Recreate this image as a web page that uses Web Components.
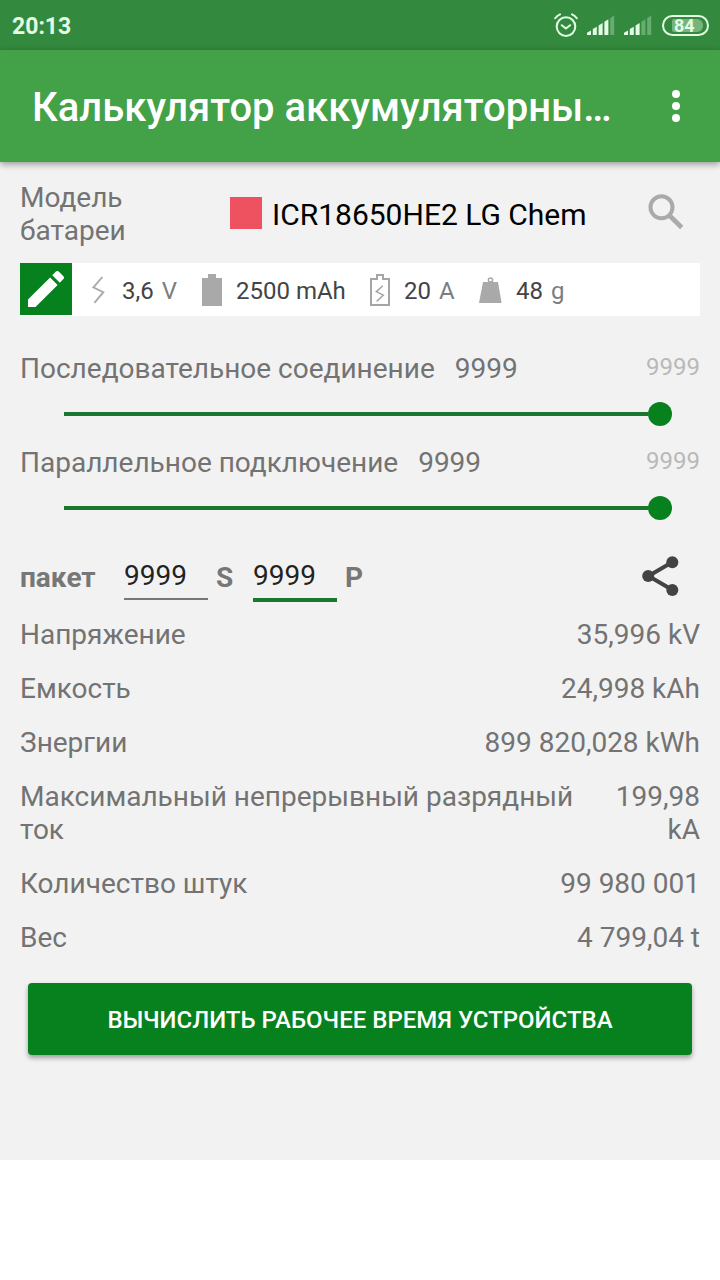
<!DOCTYPE html>
<html lang="ru">
<head>
  <meta charset="utf-8">
  <title>Калькулятор аккумуляторных батарей</title>
  <style>
    body {
      margin: 0;
      background-color: #fff;
      font-family: Roboto, "Noto Sans", sans-serif;
      --green: #07801e;
      --track: #1b7730;
      --toolbar: #43a147;
      --status: #338a3e;
      --surface: #f2f2f2;
      --label: #737373;
    }
  </style>
</head>
<body>
  <battery-app></battery-app>

  <script>
    const icons = {
      alarm: `<svg width="24" height="24" viewBox="0 0 24 24" fill="none" stroke="#e4fbe6" stroke-width="2" stroke-linecap="round" stroke-linejoin="round">
        <circle cx="12" cy="13.6" r="9.3"/><path d="M7.8 12.2l4.1 3.3 4.2-3.3M1.2 5.2Q3 2.6 6 1.3M22.8 5.2Q21 2.6 18 1.3"/></svg>`,
      more: `<svg width="8" height="34" viewBox="0 0 8 34" fill="#fff"><circle cx="4" cy="5" r="4"/><circle cx="4" cy="17" r="4"/><circle cx="4" cy="29" r="4"/></svg>`,
      search: `<svg width="36" height="36" viewBox="0 0 36 36" fill="none" stroke="#aaa"><circle cx="13.5" cy="13.3" r="11" stroke-width="4"/><path d="M21.5 21.5l12.2 12" stroke-width="4.6"/></svg>`,
      edit: `<svg width="36" height="36" viewBox="3 3 18 18" fill="#fff"><path d="M3 17.25V21h3.75L17.81 9.94l-3.75-3.75L3 17.25zM20.71 7.04c.39-.39.39-1.02 0-1.41l-2.34-2.34c-.39-.39-1.02-.39-1.41 0l-1.83 1.83 3.75 3.75 1.83-1.83z"/></svg>`,
      bolt: `<svg width="13" height="28" viewBox="0 0 13 28" fill="none" stroke="#aaa" stroke-width="1.9"><path d="M10.4 1L1.4 11.4 11.3 16.2 2.4 26.8"/></svg>`,
      battery: `<svg width="20" height="32" viewBox="0 0 20 32" fill="#a9a9a9"><path d="M0 4h6V0h8v4h6v28H0z"/></svg>`,
      discharge: `<svg width="20" height="32" viewBox="0 0 20 32" fill="none" stroke="#a5a5a5"><path d="M1 5h6V1h6v4h6v26H1z" stroke-width="2"/><path d="M12.9 11.8L6.3 17.6 13.3 21.2 6.7 27.4" stroke-width="1.5"/></svg>`,
      weight: `<svg width="23" height="26" viewBox="0 0 23 26"><path d="M4 5h15l3.6 21H0z" fill="#a9a9a9"/><circle cx="11.5" cy="3" r="2.1" fill="#fff" stroke="#a9a9a9" stroke-width="1.5"/></svg>`,
      share: `<svg width="37" height="40" viewBox="0 0 37 40" fill="#434343"><path d="M30.5 6L6.5 20l24 14" fill="none" stroke="#434343" stroke-width="4"/><circle cx="30.3" cy="6.2" r="6"/><circle cx="6.2" cy="20" r="6"/><circle cx="30.3" cy="34" r="6"/></svg>`
    };

    // four lit bars at most, the rest of the five are dimmed
    const signal = (level) => {
      let bars = "";
      for (let i = 0; i < 5; i++) {
        const h = 4 + i * 3.7;
        const x = i * 5.8;
        bars += `<path d="M${x} ${20 - h + 1.8}l4-2.4V20h-4z" fill="#e4fbe6" opacity="${i < level ? 1 : 0.3}"/>`;
      }
      return `<svg width="28" height="20" viewBox="0 0 28 20">${bars}</svg>`;
    };

    class UiIcon extends HTMLElement {
      constructor() {
        super();
        this.attachShadow({ mode: "open" });
      }

      connectedCallback() {
        const name = this.getAttribute("name");
        const svg = name === "signal" ? signal(Number(this.getAttribute("level"))) : icons[name];
        this.shadowRoot.innerHTML = `
          <style>
            :host { display: block; flex: none; }
            svg { display: block; }
          </style>
          ${svg}`;
      }
    }

    customElements.define("ui-icon", UiIcon);

    const define = (name, html) => {
      const template = document.createElement("template");
      template.innerHTML = html;

      customElements.define(name, class extends HTMLElement {
        constructor() {
          super();
          this.attachShadow({ mode: "open" });
          this.shadowRoot.appendChild(template.content.cloneNode(true));
        }
      });
    };

    define("status-bar", /* html */ `
      <style>
        :host {
          display: flex;
          align-items: center;
          box-sizing: border-box;
          height: 50px;
          padding: 0 11px 0 12px;
          background-color: var(--status);
          color: #e4fbe6;
        }

        .time {
          flex: 1;
          font-size: 23px;
          font-weight: 700;
          line-height: 27px;
          padding-top: 2px;
        }

        .icons {
          display: flex;
          align-items: center;
          gap: 9px;
        }

        .battery {
          box-sizing: border-box;
          width: 47px;
          height: 21px;
          margin-left: 1px;
          padding: 2px 4px 2px 8px;
          border: 2px solid #e4fbe6;
          border-radius: 11px;
        }

        .level {
          height: 13px;
          border-radius: 2px 6px 6px 2px;
          background-color: #75b57c;
          font-size: 18px;
          font-weight: 700;
          line-height: 14px;
          padding-left: 2px;
        }
      </style>
      <span class="time">20:13</span>
      <div class="icons">
        <ui-icon name="alarm"></ui-icon>
        <ui-icon name="signal" level="4"></ui-icon>
        <ui-icon name="signal" level="3"></ui-icon>
        <div class="battery"><div class="level">84</div></div>
      </div>`);

    define("tool-bar", /* html */ `
      <style>
        :host {
          display: flex;
          align-items: center;
          justify-content: space-between;
          box-sizing: border-box;
          height: 112px;
          padding: 0 40px 0 32px;
          background-color: var(--toolbar);
          box-shadow: 0 2px 7px rgba(0, 0, 0, .4);
          position: relative;
          color: #fff;
        }

        h1 {
          margin: 0;
          padding-top: 4px;
          font-size: 40px;
          font-weight: 500;
          line-height: 48px;
          white-space: nowrap;
        }
      </style>
      <h1><slot></slot></h1>
      <ui-icon name="more"></ui-icon>`);

    define("model-picker", /* html */ `
      <style>
        :host {
          display: flex;
          align-items: center;
          height: 66px;
          padding-right: 16px;
        }

        .label {
          width: 210px;
          color: var(--label);
        }

        .swatch {
          width: 32px;
          height: 32px;
          margin: 0 10px 3px 0;
          background-color: #ee5261;
        }

        .name {
          flex: 1;
          color: #000;
          font-size: 30px;
        }

        ui-icon {
          margin-bottom: 4px;
        }
      </style>
      <div class="label">Модель<br>батареи</div>
      <div class="swatch"></div>
      <div class="name"><slot></slot></div>
      <ui-icon name="search"></ui-icon>`);

    define("spec-bar", /* html */ `
      <style>
        :host {
          display: grid;
          grid-template-columns: 72px 110px 168px 109px 1fr;
          align-items: center;
          height: 53px;
          margin-top: 16px;
          background-color: #fff;
        }

        .edit {
          display: flex;
          align-items: center;
          justify-content: center;
          width: 52px;
          height: 52px;
          align-self: start;
          background-color: var(--green);
        }
      </style>
      <div class="edit"><ui-icon name="edit"></ui-icon></div>
      <slot></slot>`);

    define("spec-item", /* html */ `
      <style>
        :host {
          display: flex;
          align-items: center;
          font-size: 24px;
          line-height: 28px;
          color: #444;
          white-space: nowrap;
        }

        .text {
          padding: 3px 0 0 14px;
        }

        :host([wide]) .text {
          padding-left: 17px;
        }

        ::slotted(i) {
          margin-left: 8px;
          font-style: normal;
          color: #7d7d7d;
        }
      </style>
      <slot name="icon"></slot>
      <div class="text"><slot></slot></div>`);

    define("cell-slider", /* html */ `
      <style>
        :host {
          display: block;
          height: 94px;
          color: var(--label);
        }

        .caption {
          display: flex;
          align-items: center;
          height: 33px;
        }

        .value {
          flex: 1;
          margin-left: 20px;
        }

        .max {
          font-size: 24px;
          color: #b9b9b9;
          padding-bottom: 2px;
        }

        .track {
          display: flex;
          align-items: center;
          height: 24px;
          margin: 17px 28px 0 44px;
        }

        .line {
          flex: 1;
          height: 4px;
          background-color: var(--track);
        }

        .thumb {
          width: 24px;
          height: 24px;
          border-radius: 50%;
          background-color: var(--green);
        }
      </style>
      <div class="caption">
        <span><slot></slot></span>
        <span class="value"><slot name="value"></slot></span>
        <span class="max"><slot name="max"></slot></span>
      </div>
      <div class="track"><div class="line"></div><div class="thumb"></div></div>`);

    define("pack-field", /* html */ `
      <style>
        :host {
          display: block;
          box-sizing: border-box;
          width: 84px;
          height: 42px;
          border-bottom: 2px solid #777;
          color: #222;
          font-weight: 400;
          line-height: 35px;
        }

        :host([focused]) {
          height: 44px;
          margin-bottom: -2px;
          border-bottom: 4px solid var(--track);
        }
      </style>
      <slot></slot>`);

    define("pack-row", /* html */ `
      <style>
        :host {
          display: flex;
          align-items: flex-start;
          height: 60px;
          padding-right: 21px;
          color: #777;
          font-weight: 700;
        }

        .title {
          width: 104px;
        }

        .title, .unit {
          padding-top: 3px;
        }

        .unit {
          padding-left: 8px;
        }

        .series {
          width: 37px;
        }

        .parallel {
          flex: 1;
        }

        pack-field {
          margin-top: 0;
        }

        ui-icon {
          margin-top: -2px;
        }
      </style>
      <span class="title">пакет</span>
      <pack-field>9999</pack-field>
      <span class="unit series">S</span>
      <pack-field focused>9999</pack-field>
      <span class="unit parallel">P</span>
      <ui-icon name="share"></ui-icon>`);

    define("result-row", /* html */ `
      <style>
        :host {
          display: flex;
          justify-content: space-between;
          margin-bottom: 21px;
          color: var(--label);
        }

        .label {
          max-width: 560px;
        }

        .value {
          text-align: right;
        }
      </style>
      <div class="label"><slot></slot></div>
      <div class="value"><slot name="value"></slot></div>`);

    define("action-button", /* html */ `
      <style>
        :host {
          display: block;
          margin: 29px 8px 0;
        }

        button {
          display: block;
          width: 100%;
          height: 72px;
          padding: 1px 0 0;
          border: none;
          border-radius: 4px;
          background-color: var(--green);
          box-shadow: 0 3px 5px rgba(0, 0, 0, .35);
          color: #fff;
          font: 500 24px Roboto, sans-serif;
          text-transform: uppercase;
        }
      </style>
      <button><slot></slot></button>`);

    define("battery-app", /* html */ `
      <style>
        :host {
          display: block;
        }

        main {
          box-sizing: border-box;
          height: 998px;
          padding: 19px 20px 0;
          background-color: var(--surface);
          font-size: 28px;
          line-height: 33px;
        }

        .sliders {
          padding-top: 36px;
        }

        .pack {
          padding-top: 18px;
        }
      </style>
      <status-bar></status-bar>
      <tool-bar>Калькулятор аккумуляторны…</tool-bar>
      <main>
        <model-picker>ICR18650HE2 LG Chem</model-picker>
        <spec-bar>
          <spec-item wide><ui-icon slot="icon" name="bolt"></ui-icon>3,6<i>V</i></spec-item>
          <spec-item><ui-icon slot="icon" name="battery"></ui-icon>2500 mAh</spec-item>
          <spec-item><ui-icon slot="icon" name="discharge"></ui-icon>20<i>A</i></spec-item>
          <spec-item><ui-icon slot="icon" name="weight"></ui-icon>48<i>g</i></spec-item>
        </spec-bar>
        <div class="sliders">
          <cell-slider>Последовательное соединение<span slot="value">9999</span><span slot="max">9999</span></cell-slider>
          <cell-slider>Параллельное подключение<span slot="value">9999</span><span slot="max">9999</span></cell-slider>
        </div>
        <div class="pack"><pack-row></pack-row></div>
        <div class="results">
          <result-row>Напряжение<span slot="value">35,996 kV</span></result-row>
          <result-row>Емкость<span slot="value">24,998 kAh</span></result-row>
          <result-row>Знергии<span slot="value">899 820,028 kWh</span></result-row>
          <result-row>Максимальный непрерывный разрядный ток<span slot="value">199,98<br>kA</span></result-row>
          <result-row>Количество штук<span slot="value">99 980 001</span></result-row>
          <result-row>Вес<span slot="value">4 799,04 t</span></result-row>
        </div>
        <action-button>Вычислить рабочее время устройства</action-button>
      </main>`);
  </script>
</body>
</html>
